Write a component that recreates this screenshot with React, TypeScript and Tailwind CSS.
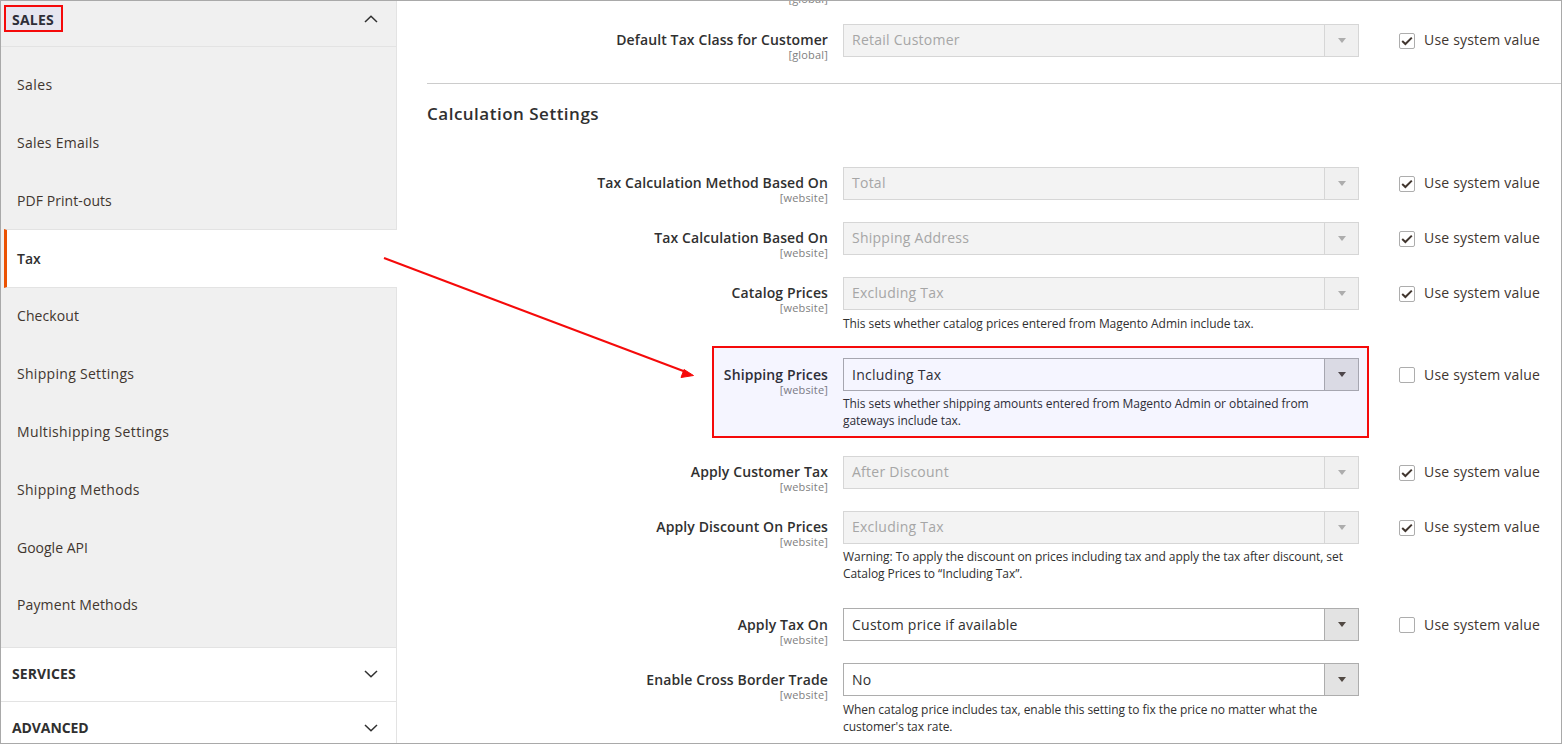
const sidebarItems = [
  { name: "Sales", spacing: "tracking-[0.4px]" },
  { name: "Sales Emails", spacing: "tracking-[0.25px]" },
  { name: "PDF Print-outs", spacing: "tracking-[0.07px]" },
  { name: "Tax", spacing: "tracking-[0px]" },
  { name: "Checkout", spacing: "tracking-[0.1px] pb-[1px]" },
  { name: "Shipping Settings", spacing: "tracking-[0.3px]" },
  { name: "Multishipping Settings", spacing: "tracking-[0.36px]" },
  { name: "Shipping Methods", spacing: "tracking-[0.3px]" },
  { name: "Google API", spacing: "tracking-[0px]" },
  { name: "Payment Methods", spacing: "tracking-[0.13px]" },
];

type RowData = {
  label: string;
  scope: string;
  value: string;
  checked: boolean;
  noSystem?: boolean;
  notes?: string[];
  noteGap?: string;
  spacing: string;
};

const topRows: RowData[] = [
  { label: "", scope: "[global]", value: "", checked: true, noSystem: true, spacing: "mb-[19px]" },
  { label: "Default Tax Class for Customer", scope: "[global]", value: "Retail Customer", checked: true, spacing: "mb-[22px]" },
];

const calcRows: RowData[] = [
  { label: "Tax Calculation Method Based On", scope: "[website]", value: "Total", checked: true, spacing: "mb-[18px]" },
  { label: "Tax Calculation Based On", scope: "[website]", value: "Shipping Address", checked: true, spacing: "mb-[18px]" },
  {
    label: "Catalog Prices",
    scope: "[website]",
    value: "Excluding Tax",
    checked: true,
    notes: ["This sets whether catalog prices entered from Magento Admin include tax."],
    noteGap: "mt-[5px]",
    spacing: "mb-[26px]",
  },
  {
    label: "Shipping Prices",
    scope: "[website]",
    value: "Including Tax",
    checked: false,
    notes: ["This sets whether shipping amounts entered from Magento Admin or obtained from", "gateways include tax."],
    noteGap: "mt-[4px]",
    spacing: "mb-[27px]",
  },
  { label: "Apply Customer Tax", scope: "[website]", value: "After Discount", checked: true, spacing: "mb-[18px]" },
  {
    label: "Apply Discount On Prices",
    scope: "[website]",
    value: "Excluding Tax",
    checked: true,
    notes: [
      "Warning: To apply the discount on prices including tax and apply the tax after discount, set",
      "Catalog Prices to “Including Tax”.",
    ],
    noteGap: "mt-[4px]",
    spacing: "mb-[26px]",
  },
  { label: "Apply Tax On", scope: "[website]", value: "Custom price if available", checked: false, spacing: "mb-[17px]" },
  {
    label: "Enable Cross Border Trade",
    scope: "[website]",
    value: "No",
    checked: false,
    noSystem: true,
    notes: [
      "When catalog price includes tax, enable this setting to fix the price no matter what the",
      "customer's tax rate.",
    ],
    noteGap: "mt-[5px]",
    spacing: "mb-0",
  },
];

function Chevron({ up }: { up?: boolean }) {
  return (
    <svg width="14" height="8" viewBox="0 0 14 8" className="shrink-0" aria-hidden="true">
      <path d={up ? "M1 7L7 1.2L13 7" : "M1 1L7 6.8L13 1"} fill="none" stroke="#303030" strokeWidth="1.5" />
    </svg>
  );
}

function Sidebar() {
  return (
    <aside className="w-[396px] shrink-0 h-full flex flex-col text-[14px] text-[#41362f]">
      <div className="h-[46px] shrink-0 bg-[#f0f0f0] border-b border-r border-[#e3e3e3] flex items-center justify-between pl-[11px] pr-[18px] pb-[9px]">
        <span className="font-bold text-[#303030] tracking-[0.2px]">SALES</span>
        <Chevron up />
      </div>
      <ul className="bg-[#f0f0f0] pt-[9px] h-[600px] shrink-0 border-r border-[#e3e3e3]">
        {sidebarItems.map((item) =>
          item.name === "Tax" ? (
            <li
              key={item.name}
              className="h-[59px] -mb-px bg-white border-y border-[#e3e3e3] -mr-px ml-[3px] border-l-[3px] border-l-[#eb5202] flex items-center pl-[10px] font-semibold text-[#303030]"
            >
              {item.name}
            </li>
          ) : (
            <li key={item.name} className={`h-[57.75px] flex items-center pl-[16px] ${item.spacing}`}>
              {item.name}
            </li>
          )
        )}
      </ul>
      <div className="h-[55px] shrink-0 border-y border-r border-[#e3e3e3] flex items-center justify-between pl-[11px] pr-[18px] pb-[2px]">
        <span className="font-bold text-[#303030] tracking-[0.1px]">SERVICES</span>
        <Chevron />
      </div>
      <div className="flex-1 border-r border-[#e3e3e3] flex items-center justify-between pl-[11px] pr-[18px] pt-[10px]">
        <span className="font-bold text-[#303030] -tracking-[0.1px]">ADVANCED</span>
        <Chevron />
      </div>
    </aside>
  );
}

function SelectBox({ value, disabled }: { value: string; disabled: boolean }) {
  return (
    <div
      className={
        disabled
          ? "h-[33px] flex border border-[#d6d6d6] bg-[#f3f3f3] text-[#a6a6a6]"
          : "h-[33px] flex border border-[#adadad] bg-white text-[#303030]"
      }
    >
      <div className={disabled ? "flex-1 flex items-center pl-[8px] pb-[2px] tracking-[0.25px]" : "flex-1 flex items-center pl-[8px] tracking-[0.25px]"}>
        {value}
      </div>
      <div
        className={
          disabled
            ? "w-[34px] flex items-center justify-center border-l border-[#d6d6d6] bg-[#f0f0f0]"
            : "w-[34px] flex items-center justify-center border-l border-[#adadad] bg-[#e3e3e3]"
        }
      >
        <svg width="8" height="5" viewBox="0 0 8 5" aria-hidden="true">
          <path d="M0 0H8L4 5Z" fill={disabled ? "#adadad" : "#514943"} />
        </svg>
      </div>
    </div>
  );
}

function SystemValue({ checked }: { checked: boolean }) {
  return (
    <div className="ml-[40px] h-[33px] flex items-center gap-[9px] text-[#41362f]">
      <span className="w-[16px] h-[16px] mt-[1px] rounded-[2px] border border-[#adadad] bg-white flex items-center justify-center">
        {checked && (
          <svg width="12" height="10" viewBox="0 0 12 10" aria-hidden="true">
            <path d="M1.2 5L4.4 8L10.8 1.6" fill="none" stroke="#41362f" strokeWidth="2" />
          </svg>
        )}
      </span>
      <span className={checked ? "tracking-[0.19px] pb-[2px]" : "tracking-[0.19px]"}>Use system value</span>
    </div>
  );
}

function ConfigRow({ row }: { row: RowData }) {
  const disabled = row.checked;
  return (
    <div className={`flex items-start ${row.spacing}`}>
      <div className={disabled ? "w-[401px] shrink-0 text-right pt-[7px]" : "w-[401px] shrink-0 text-right pt-[8px]"}>
        <div className="font-semibold leading-[17px] min-h-[17px] text-[#303030] tracking-[0.11px]">{row.label}</div>
        <div className="text-[11px] leading-[13px] text-[#808080] tracking-[0.17px]">{row.scope}</div>
      </div>
      <div className="w-[516px] shrink-0 ml-[15px]">
        <SelectBox value={row.value} disabled={disabled} />
        {row.notes && (
          <div className={`${row.noteGap} text-[12px] leading-[17px] text-[#303030] -tracking-[0.06px]`}>
            {row.notes.map((line) => (
              <div key={line}>{line}</div>
            ))}
          </div>
        )}
      </div>
      {!row.noSystem && <SystemValue checked={row.checked} />}
    </div>
  );
}

export default function App() {
  return (
    <div className="relative h-[744px] w-[1562px] overflow-hidden bg-white border border-[#a9a9a9] flex text-[14px] font-['Open_Sans',sans-serif]">
      <Sidebar />
      <main className="flex-1 min-w-0 pl-[30px]">
        <div className="-mt-[33px]">
          {topRows.map((row, i) => (
            <ConfigRow key={i} row={row} />
          ))}
        </div>
        <div className="border-t border-[#cccccc] pt-[18px]">
          <h2 className="text-[17px] leading-[24px] font-semibold text-[#303030] tracking-[0.5px] mb-[41px]">
            Calculation Settings
          </h2>
          {calcRows.map((row) => (
            <ConfigRow key={row.label} row={row} />
          ))}
        </div>
      </main>

      {/* annotations on top of the screenshot */}
      <div className="absolute left-[3px] top-[4px] w-[59px] h-[27px] border-2 border-[#f50a0a] bg-[#0000ff]/[0.04]" />
      <div className="absolute left-[711px] top-[345px] w-[657px] h-[92px] border-2 border-[#f50a0a] bg-[#0000ff]/[0.04]" />
      <svg className="absolute left-[380px] top-[250px]" width="320" height="130" viewBox="0 0 320 130" aria-hidden="true">
        <line x1="3" y1="7" x2="305" y2="121" stroke="#f50a0a" strokeWidth="2" />
        <path d="M312.5 124.5L303 118.5L300 126.5Z" fill="#f50a0a" stroke="#f50a0a" strokeWidth="1" />
      </svg>
    </div>
  );
}
